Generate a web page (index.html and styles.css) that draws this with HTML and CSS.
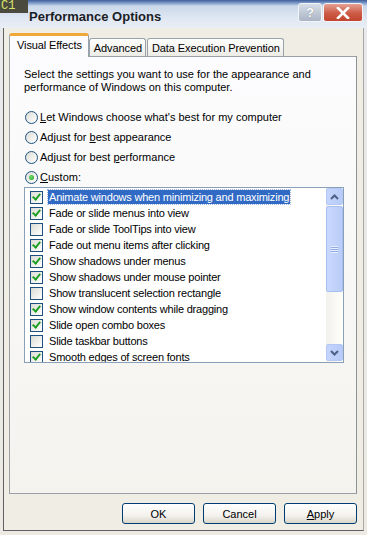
FILE: index.html
```html
<!DOCTYPE html>
<html>
<head>
<meta charset="UTF-8">
<title>Performance Options</title>
<link rel="stylesheet" href="styles.css">
</head>
<body>
<div class="screen">
  <div class="titlebar">
    <span class="desk-c1">C1</span>
    <span class="title">Performance Options</span>
    <div class="caption">
      <span class="cap-help">?</span>
      <span class="cap-close">
        <svg width="14" height="12" viewBox="0 0 14 12"><path d="M2 1 L12 11 M12 1 L2 11" stroke="#fff" stroke-width="2.6" stroke-linecap="square"/></svg>
      </span>
    </div>
  </div>
  <div class="window">
    <div class="tabs">
      <span class="tab active">Visual Effects</span>
      <span class="tab">Advanced</span>
      <span class="tab">Data Execution Prevention</span>
    </div>
    <div class="panel">
      <p class="intro">Select the settings you want to use for the appearance and<br>performance of Windows on this computer.</p>
      <div class="radios">
        <label class="radio"><span class="dot"></span><span><u>L</u>et Windows choose what's best for my computer</span></label>
        <label class="radio"><span class="dot"></span><span>Adjust for <u>b</u>est appearance</span></label>
        <label class="radio"><span class="dot"></span><span>Adjust for best <u>p</u>erformance</span></label>
        <label class="radio"><span class="dot on"></span><span><u>C</u>ustom:</span></label>
      </div>
      <div class="listbox">
        <ul class="items">
          <li><span class="chk on"></span><span class="txt sel">Animate windows when minimizing and maximizing</span></li>
          <li><span class="chk on"></span><span class="txt">Fade or slide menus into view</span></li>
          <li><span class="chk"></span><span class="txt">Fade or slide ToolTips into view</span></li>
          <li><span class="chk on"></span><span class="txt">Fade out menu items after clicking</span></li>
          <li><span class="chk on"></span><span class="txt">Show shadows under menus</span></li>
          <li><span class="chk on"></span><span class="txt">Show shadows under mouse pointer</span></li>
          <li><span class="chk"></span><span class="txt">Show translucent selection rectangle</span></li>
          <li><span class="chk on"></span><span class="txt">Show window contents while dragging</span></li>
          <li><span class="chk on"></span><span class="txt">Slide open combo boxes</span></li>
          <li><span class="chk"></span><span class="txt">Slide taskbar buttons</span></li>
          <li><span class="chk on"></span><span class="txt">Smooth edges of screen fonts</span></li>
        </ul>
        <div class="scrollbar">
          <span class="sb-btn"><svg width="9" height="6" viewBox="0 0 9 6"><path d="M1 5 L4.5 1.5 L8 5" fill="none" stroke="#4d6185" stroke-width="2"/></svg></span>
          <span class="sb-thumb"><span class="grip"></span></span>
          <span class="sb-track"></span>
          <span class="sb-btn"><svg width="9" height="6" viewBox="0 0 9 6"><path d="M1 1 L4.5 4.5 L8 1" fill="none" stroke="#4d6185" stroke-width="2"/></svg></span>
        </div>
      </div>
    </div>
    <div class="buttons">
      <button class="btn">OK</button>
      <button class="btn">Cancel</button>
      <button class="btn"><u>A</u>pply</button>
    </div>
  </div>
</div>
</body>
</html>
```

FILE: styles.css
```css
body {
  margin: 0;
  background-color: #e4e6ea;
  font-family: "Liberation Sans", Arial, sans-serif;
  font-size: 11px;
  color: #000;
}
.screen {
  width: 367px;
  height: 535px;
  overflow: hidden;
  position: relative;
  background: linear-gradient(#e8e9ec, #eceae2);
}
.titlebar {
  height: 28px;
  display: flex;
  align-items: center;
  background: linear-gradient(#3e5d96 0, #7d9bcb 3px, #cad8ea 6px, #dfe7f2 18px, #e9eef5 28px);
}
.desk-c1 {
  position: absolute;
  left: 0;
  top: 0;
  width: 28px;
  height: 13px;
  background: #4b4a3e;
  color: #d8e36a;
  font-family: "Liberation Mono", monospace;
  font-size: 12px;
  line-height: 13px;
  padding-left: 1px;
  box-sizing: border-box;
}
.title {
  margin-left: 29px;
  padding-top: 4px;
  font-weight: bold;
  font-size: 13px;
  color: #1a1d26;
}
.caption {
  margin-left: auto;
  margin-right: 4px;
  display: flex;
  align-self: flex-start;
  margin-top: 3px;
}
.cap-help, .cap-close {
  height: 17px;
  display: flex;
  align-items: center;
  justify-content: center;
  border: 1px solid #f2f4f8;
  border-radius: 3px;
}
.cap-help {
  width: 22px;
  background: linear-gradient(#d8dee8, #aab4c4);
  color: #fff;
  font-weight: bold;
  font-size: 13px;
  text-shadow: 0 0 1px #6a7486;
}
.cap-close {
  width: 38px;
  margin-left: 1px;
  background: linear-gradient(#e6a193, #cc5a45 55%, #c2452f);
}
.window {
  margin-left: 3px;
  width: 361px;
  height: 503px;
  box-sizing: border-box;
  border-left: 1px solid #5f6064;
  border-right: 1px solid #a8a8a4;
  border-bottom: 1px solid #5f6064;
  background: #f0eee4;
  padding: 8px 6px 0 5px;
  display: flex;
  flex-direction: column;
}
.tabs {
  display: flex;
  align-items: flex-end;
  height: 20px;
  position: relative;
  z-index: 1;
}
.tab {
  height: 17px;
  padding: 0 3px 0 4px;
  margin-right: 1px;
  border: 1px solid #98a2ab;
  border-bottom: none;
  border-radius: 3px 3px 0 0;
  background: linear-gradient(#ffffff, #ecebe5);
  line-height: 18px;
  font-size: 11px;
  letter-spacing: -0.1px;
}
.tab.active {
  height: 21px;
  padding: 0 6px 0 7px;
  margin-right: 0;
  border-top: 3px solid #f0a83a;
  background: #fcfcfe;
  line-height: 19px;
  margin-bottom: -1px;
}
.panel {
  height: 436px;
  border: 1px solid #9aa0a6;
  border-right-color: #8e9296;
  background: linear-gradient(#fcfcfe, #f4f3ee);
  padding: 0 0 0 13px;
  width: 333px;
}
.intro {
  margin: 11px 0 0 1px;
  line-height: 13px;
}
.radios {
  margin-top: 13px;
  display: flex;
  flex-direction: column;
}
.radio {
  height: 20px;
  display: flex;
  align-items: center;
  gap: 2px;
  margin-left: 2px;
}
.dot {
  width: 11px;
  height: 11px;
  border: 1px solid #1c5180;
  border-radius: 50%;
  background: linear-gradient(135deg, #dcdcd5, #ffffff);
  display: flex;
  align-items: center;
  justify-content: center;
}
.dot.on::after {
  content: "";
  width: 5px;
  height: 5px;
  border-radius: 50%;
  background: radial-gradient(circle at 40% 40%, #6fdc6f, #21a121);
}
.listbox {
  margin: 0 0 0 1px;
  width: 318px;
  height: 174px;
  border: 1px solid #8a9fb8;
  background: #fff;
  display: flex;
}
.items {
  list-style: none;
  margin: 0;
  padding: 1px 0 0 0;
  flex: 1;
  overflow: hidden;
}
.items li {
  height: 16px;
  display: flex;
  align-items: center;
  padding-left: 5px;
  letter-spacing: -0.2px;
}
.chk {
  width: 11px;
  height: 11px;
  border: 1px solid #1c5180;
  background: linear-gradient(135deg, #dcdcd5, #ffffff);
  margin-right: 5px;
  position: relative;
}
.chk.on::after {
  content: "";
  position: absolute;
  left: 3px;
  top: 0px;
  width: 3px;
  height: 6px;
  border: solid #21a121;
  border-width: 0 2px 2px 0;
  transform: rotate(40deg);
}
.txt {
  padding: 1px 1px;
  line-height: 12px;
}
.txt.sel {
  background: #316ac5;
  color: #fff;
  outline: 1px dotted #9fb6e0;
}
.scrollbar {
  width: 17px;
  display: flex;
  flex-direction: column;
  background: linear-gradient(90deg, #f3f1ec, #fefefb);
}
.sb-btn {
  height: 15px;
  margin: 0 0 1px 0;
  border: 1px solid #b4c8f6;
  border-radius: 2px;
  background: linear-gradient(90deg, #c5d4fc, #b6cbf8);
  display: flex;
  align-items: center;
  justify-content: center;
}
.sb-thumb {
  height: 84px;
  border: 1px solid #a8bff2;
  border-radius: 2px;
  background: linear-gradient(90deg, #c9d8fd, #bacdf8);
  display: flex;
  align-items: center;
  justify-content: center;
}
.grip {
  width: 7px;
  height: 7px;
  background: repeating-linear-gradient(#e8effe 0 1px, #8faae6 1px 2px);
}
.sb-track {
  flex: 1;
}
.buttons {
  display: flex;
  justify-content: flex-end;
  gap: 8px;
  margin-top: 9px;
}
.btn {
  width: 73px;
  height: 21px;
  border: 1px solid #003c74;
  border-radius: 3px;
  background: linear-gradient(#ffffff, #f3f2ee 60%, #d9d6c9);
  font-family: "Liberation Sans", Arial, sans-serif;
  font-size: 11px;
  color: #000;
  padding: 0;
}
```
